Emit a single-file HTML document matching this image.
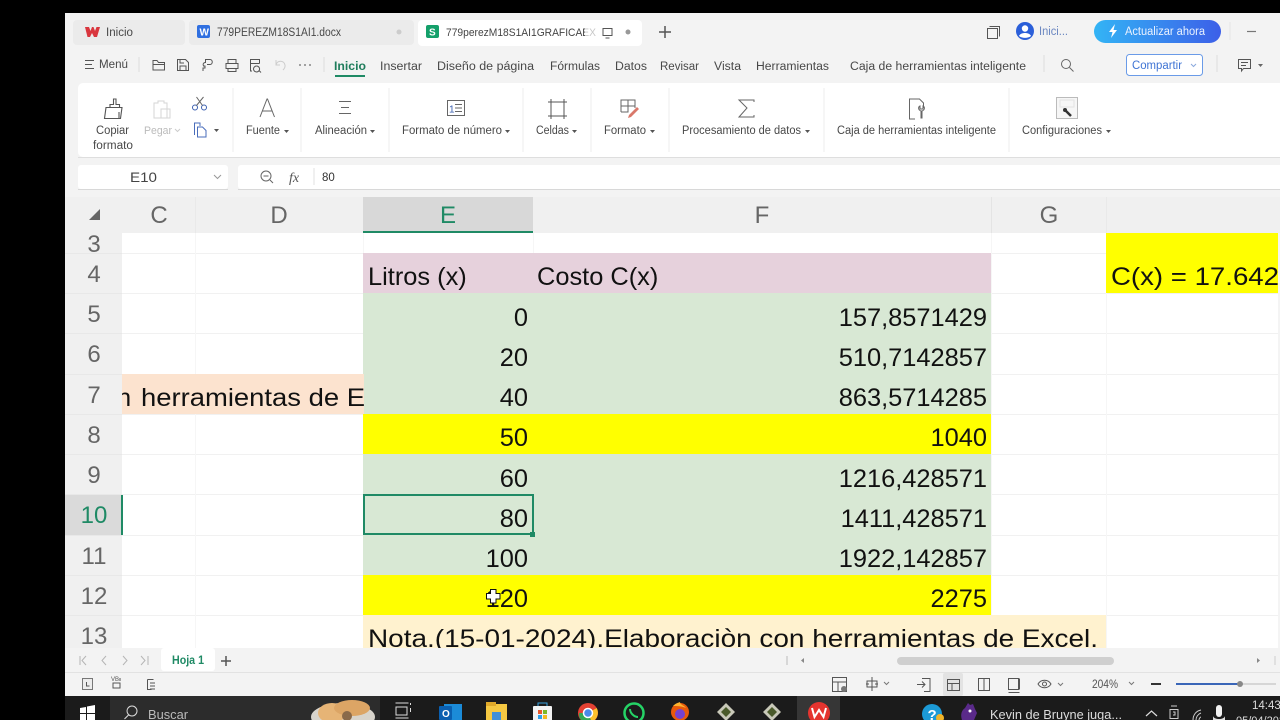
<!DOCTYPE html>
<html><head><meta charset="utf-8"><style>
html,body{margin:0;padding:0;background:#000;width:1280px;height:720px;overflow:hidden}
svg{display:block;font-family:"Liberation Sans",sans-serif}
.t{font-size:11.5px;fill:#484848}
.c{font-size:25.4px;fill:#111}
.r{font-size:24px;fill:#666;text-anchor:middle}
.i{fill:none;stroke:#555;stroke-width:1}
</style></head><body>
<svg width="1280" height="720" viewBox="0 0 1280 720" xmlns="http://www.w3.org/2000/svg">
<defs>
<clipPath id="grid"><rect x="122" y="233" width="1156" height="415"/></clipPath>
<clipPath id="org"><rect x="122" y="374" width="242" height="40"/></clipPath>
<clipPath id="yel"><rect x="1106" y="233" width="172" height="60"/></clipPath>
<clipPath id="task"><rect x="0" y="696" width="1280" height="24"/></clipPath>
<linearGradient id="up" x1="0" x2="1"><stop offset="0" stop-color="#33b4f5"/><stop offset="1" stop-color="#3c5fe8"/></linearGradient>
</defs>
<rect width="1280" height="720" fill="#000"/>
<rect x="65" y="13" width="1215" height="683" fill="#f3f3f3"/>

<!-- tabs -->
<rect x="73" y="20" width="112" height="25" rx="4" fill="#ebebeb"/>
<rect x="189" y="20" width="225" height="25" rx="4" fill="#ebebeb"/>
<rect x="418" y="20" width="224" height="26" rx="4" fill="#fff"/>
<path d="M85 27h4l1.500 4 1.500-4h1.500l1.500 4 1.500-4h3.500l-3 10h-3l-2-4-2 4h-2.500z" fill="#d9363e"/>
<text x="106" y="36" class="t" textLength="27" lengthAdjust="spacingAndGlyphs">Inicio</text>
<rect x="197" y="25" width="13" height="13" rx="2" fill="#2f6fe0"/>
<text x="199.500" y="35.500" font-size="10" font-weight="bold" fill="#fff">W</text>
<text x="217" y="36" class="t" textLength="124" lengthAdjust="spacingAndGlyphs">779PEREZM18S1AI1.docx</text>
<circle cx="399" cy="32" r="2.500" fill="#ccc"/>
<rect x="426" y="25" width="13" height="13" rx="2" fill="#14a06a"/>
<text x="429" y="35.500" font-size="10" font-weight="bold" fill="#fff">S</text>
<text x="446" y="36" font-size="11" fill="#444" textLength="150" lengthAdjust="spacingAndGlyphs">779perezM18S1AI1GRAFICAEX</text>
<rect x="585" y="22" width="12" height="20" fill="#fff" opacity=".7"/>
<path class="i" d="M603 28.500h9v7h-9zM605.500 38h4" stroke="#888"/>
<circle cx="628" cy="32" r="2.500" fill="#999"/>
<path d="M665 26v12M659 32h12" stroke="#555" stroke-width="1.500"/>

<rect x="987.500" y="28.500" width="10" height="10" fill="#f3f3f3" stroke="#555"/><path d="M989.500 26.500h10v10" fill="none" stroke="#555"/>
<circle cx="1025" cy="31" r="9" fill="#2b5fd9"/><circle cx="1025" cy="28.500" r="3.200" fill="#fff"/><path d="M1019 36c1.500-4 10.500-4 12 0-3 2.500-9 2.500-12 0z" fill="#fff"/>
<text x="1039" y="35" font-size="11.500" style="fill:#6a86c0" textLength="29" lengthAdjust="spacingAndGlyphs">Inici...</text>
<rect x="1094" y="20" width="127" height="23" rx="11.500" fill="url(#up)"/>
<path d="M1115 24l-6 8h3.500l-1.500 6 6-8h-3.500z" fill="#fff"/>
<text x="1125" y="35" font-size="11.500" fill="#eaf2ff" textLength="80" lengthAdjust="spacingAndGlyphs">Actualizar ahora</text>
<path d="M1230 22v18" stroke="#e4e4e4"/>
<path d="M1247 31.500h9" stroke="#777" stroke-width="1.200"/>

<!-- menu row -->
<path d="M85 60.500h9M85 64.500h7M85 68.500h9" stroke="#555"/>
<text x="99" y="68" class="t" textLength="29" lengthAdjust="spacingAndGlyphs">Menú</text>
<path d="M139 57v15" stroke="#ddd"/>
<path class="i" d="M153 60.500h4l1.500 2h6v7.500h-11.500zM153 64.500h11.500"/>
<path class="i" d="M177.500 59.500h8l3 3v8h-11zM180 70v-4h6v4M180 60v3h4"/>
<path class="i" d="M203 71v-3h2v-2h-1.500c-1-2 0-3.500 2-3.500v-3h4.500c3 0 3 5 0 5h-3"/>
<path class="i" d="M228 63v-3.500h8v3.500M226 63.500h12v5h-12zM228 68v3.500h8v-3.500"/>
<path class="i" d="M252 71h-1.500v-11.500h9v4M250.500 63.500h9M256.500 66a3 3 0 1 0 .1 0M259 70.500l2 2"/>
<path d="M276 65c1-5 8-5 9 0 .5 2-1 4-2 5M276 60v5h4" fill="none" stroke="#ccc"/>
<circle cx="300" cy="65" r=".9" fill="#666"/><circle cx="305" cy="65" r=".9" fill="#666"/><circle cx="310" cy="65" r=".9" fill="#666"/>
<path d="M324 57v15" stroke="#ddd"/>
<text x="334" y="70" font-size="12" font-weight="bold" fill="#1f7d5c" textLength="32" lengthAdjust="spacingAndGlyphs">Inicio</text>
<rect x="335" y="75" width="30" height="2" fill="#1f8a65"/>
<text x="380" y="70" class="t" textLength="42" lengthAdjust="spacingAndGlyphs">Insertar</text>
<text x="437" y="70" class="t" textLength="97" lengthAdjust="spacingAndGlyphs">Diseño de página</text>
<text x="550" y="70" class="t" textLength="50" lengthAdjust="spacingAndGlyphs">Fórmulas</text>
<text x="615" y="70" class="t" textLength="32" lengthAdjust="spacingAndGlyphs">Datos</text>
<text x="660" y="70" class="t" textLength="39" lengthAdjust="spacingAndGlyphs">Revisar</text>
<text x="714" y="70" class="t" textLength="27" lengthAdjust="spacingAndGlyphs">Vista</text>
<text x="756" y="70" class="t" textLength="73" lengthAdjust="spacingAndGlyphs">Herramientas</text>
<text x="850" y="70" class="t" textLength="176" lengthAdjust="spacingAndGlyphs">Caja de herramientas inteligente</text>
<path d="M1044 55v17" stroke="#ddd"/>
<circle cx="1066" cy="64" r="4.500" fill="none" stroke="#666"/><path d="M1069.500 67.500l4 4" stroke="#666"/>
<rect x="1126.500" y="54.500" width="76" height="21" rx="3" fill="#fff" stroke="#6a9be8"/>
<text x="1132" y="69" font-size="11.500" fill="#3f74d4" textLength="50" lengthAdjust="spacingAndGlyphs">Compartir</text>
<path d="M1191 64l2.500 2.500 2.500-2.500" fill="none" stroke="#8aa8dd"/>
<path d="M1217 55v17" stroke="#ddd"/>
<path class="i" d="M1238.500 59.500h12v9h-7l-2 2.500v-2.500h-3zM1241 62.500h7M1241 65.500h5"/>
<path d="M1258 64h5l-2.500 3z" fill="#666"/>

<!-- ribbon -->
<rect x="78" y="83" width="1210" height="74" rx="5" fill="#fff"/>
<path d="M78 157.500h1202" stroke="#dedede"/>
<g stroke="#ececec"><path d="M233 88v64M301 88v64M389 88v64M523 88v64M591 88v64M669 88v64M824 88v64M1009 88v64"/></g>
<path d="M106 107.500h16l-1.500 11h-16zM110 107.500v-3h3.500v-5.500h2.500v5.500h3.500v3M119 112v6" fill="none" stroke="#555" stroke-width="1.100"/>
<text x="96" y="134" class="t" textLength="33" lengthAdjust="spacingAndGlyphs">Copiar</text>
<text x="93" y="149" class="t" textLength="40" lengthAdjust="spacingAndGlyphs">formato</text>
<path d="M154 103h4v-2h6v2h3v15h-13z M161 109h9v9h-9z" fill="none" stroke="#d5d5d5"/>
<text x="144" y="134" font-size="11" fill="#bbb" textLength="28" lengthAdjust="spacingAndGlyphs">Pegar</text>
<path d="M175 129l2.500 2.500 2.500-2.500" fill="none" stroke="#ccc"/>
<g fill="none" stroke="#3a5fb0"><circle cx="195" cy="107.500" r="2.500"/><circle cx="204" cy="107.500" r="2.500"/></g>
<path d="M196.500 105.500l7-8.500M202.500 105.500l-6-8.500" stroke="#666" fill="none"/>
<path d="M194.500 135v-12h5.500v3M197.500 137v-10h5l3.500 3.500v6.500z" fill="none" stroke="#4a6dbb"/>
<path d="M214 129h5l-2.500 3z" fill="#555"/>
<path d="M260 117l7-18h.5l7 18M262.500 111h10" fill="none" stroke="#666"/>
<text x="246" y="134" class="t" textLength="34" lengthAdjust="spacingAndGlyphs">Fuente</text>
<path d="M284 130h5l-2.500 3z" fill="#555"/>
<path d="M339 101.500h12M341 107.500h8M339 113.500h12" stroke="#666"/>
<text x="315" y="134" class="t" textLength="52" lengthAdjust="spacingAndGlyphs">Alineación</text>
<path d="M370 130h5l-2.500 3z" fill="#555"/>
<rect x="447.500" y="100.500" width="17" height="15" fill="none" stroke="#666"/>
<text x="449" y="112.500" font-size="10" fill="#3a5fb0">1</text><path d="M455 104.500h7M455 108h7M455 111.500h7" stroke="#666"/>
<text x="402" y="134" class="t" textLength="100" lengthAdjust="spacingAndGlyphs">Formato de número</text>
<path d="M505 130h5l-2.500 3z" fill="#555"/>
<path d="M551 102h13v14h-13zM551 99v20M564 99v20M548 102h19M548 116h19" fill="none" stroke="#555"/>
<text x="536" y="134" class="t" textLength="33" lengthAdjust="spacingAndGlyphs">Celdas</text>
<path d="M572 130h5l-2.500 3z" fill="#555"/>
<path d="M621 112v-12h14v8M621 106h14M628 100v12h-7" fill="none" stroke="#666"/>
<path d="M629 115l8-8 2 2-8 8-3 1z" fill="#d9786a"/>
<text x="604" y="134" class="t" textLength="42" lengthAdjust="spacingAndGlyphs">Formato</text>
<path d="M650 130h5l-2.500 3z" fill="#555"/>
<path d="M754 102v-2h-15l8 8-8 9h15v-2" fill="none" stroke="#666"/>
<text x="682" y="134" class="t" textLength="119" lengthAdjust="spacingAndGlyphs">Procesamiento de datos</text>
<path d="M805 130h5l-2.500 3z" fill="#555"/>
<path d="M915 119h-5.500v-20h10l4 4v5M921 111c-3-1-3-4-1-5v3h3v-3c2 1 2 4-1 5v7h-1z" fill="none" stroke="#666"/>
<text x="837" y="134" class="t" textLength="159" lengthAdjust="spacingAndGlyphs">Caja de herramientas inteligente</text>
<rect x="1056.500" y="97.500" width="21" height="21" fill="#f6f6f6" stroke="#bbb"/>
<path d="M1060 100h14v7h-14z" fill="none" stroke="#e3e3e3"/>
<path d="M1065 110l6 6" stroke="#333" stroke-width="2.500"/><circle cx="1065" cy="110" r="2" fill="#333"/>
<text x="1022" y="134" class="t" textLength="80" lengthAdjust="spacingAndGlyphs">Configuraciones</text>
<path d="M1106 130h5l-2.500 3z" fill="#555"/>

<!-- formula bar -->
<rect x="78" y="165" width="150" height="24" rx="3" fill="#fff"/>
<rect x="238" y="165" width="1050" height="24" rx="3" fill="#fff"/>
<path d="M238 189.500h1042" stroke="#d8d8d8"/><path d="M78 189.500h150" stroke="#d8d8d8"/>
<text x="130" y="182" font-size="14" fill="#444" textLength="27" lengthAdjust="spacingAndGlyphs">E10</text>
<path d="M214 175l3.500 3.500 3.500-3.500" fill="none" stroke="#999"/>
<circle cx="266" cy="176" r="5" fill="none" stroke="#666"/><path d="M263.500 176h5M270 180l3 3" stroke="#666"/>
<text x="289" y="182" font-family="Liberation Serif" font-style="italic" font-size="14" fill="#555">fx</text>
<path d="M314 168v17" stroke="#e2e2e2"/>
<text x="322" y="181" font-size="11.500" fill="#333">80</text>

<!-- column headers -->
<rect x="65" y="197" width="1215" height="36" fill="#f0f0f0"/>
<path d="M195.500 197v36M1106.500 197v36" stroke="#e9e9e9"/><path d="M991.500 197v36" stroke="#e4e4e4"/>
<path d="M100 209v11h-11z" fill="#666"/>
<rect x="363" y="197" width="170" height="34" fill="#d8d8d8"/>
<rect x="363" y="231" width="170" height="2" fill="#1f8a65"/>
<text x="159" y="223" class="r">C</text>
<text x="279" y="223" class="r">D</text>
<text x="448" y="223" class="r" style="fill:#1f8a65">E</text>
<text x="762" y="223" class="r">F</text>
<text x="1049" y="223" class="r">G</text>

<!-- row headers -->
<rect x="65" y="233" width="57" height="415" fill="#f0f0f0"/>
<rect x="65" y="495" width="57" height="40" fill="#dadada"/>
<g stroke="#e8e8e8"><path d="M65 253.500h57M65 293.500h57M65 333.500h57M65 374.500h57M65 414.500h57M65 454.500h57M65 494.500h57M65 535.500h57M65 575.500h57M65 615.500h57"/></g>
<text x="94" y="252" class="r">3</text>
<text x="94" y="282" class="r">4</text>
<text x="94" y="322" class="r">5</text>
<text x="94" y="362" class="r">6</text>
<text x="94" y="403" class="r">7</text>
<text x="94" y="443" class="r">8</text>
<text x="94" y="483" class="r">9</text>
<text x="94" y="523" class="r" style="fill:#1f8a65">10</text>
<text x="94" y="564" class="r">11</text>
<text x="94" y="604" class="r">12</text>
<text x="94" y="644" class="r">13</text>

<!-- grid -->
<rect x="122" y="233" width="1156" height="415" fill="#fff"/>
<rect x="1278" y="233" width="2" height="415" fill="#f4f4f4"/>
<g stroke="#f1f1f1">
<path d="M122 253.500h1156M122 293.500h1156M122 333.500h1156M122 374.500h1156M122 414.500h1156M122 454.500h1156M122 494.500h1156M122 535.500h1156M122 575.500h1156M122 615.500h1156"/>
</g>
<g stroke="#f6f6f6">
<path d="M195.500 233v415M363.500 233v415M533.500 233v20M991.500 233v415M1106.500 233v415"/>
</g>
<rect x="121" y="495" width="2" height="40" fill="#1f8a65"/>
<rect x="363" y="253" width="628" height="40" fill="#e6d1dc"/>
<rect x="363" y="293" width="628" height="121" fill="#d8e8d4"/>
<rect x="363" y="414" width="628" height="40" fill="#ffff00"/>
<rect x="363" y="454" width="628" height="121" fill="#d8e8d4"/>
<rect x="363" y="575" width="628" height="40" fill="#ffff00"/>
<rect x="363" y="615" width="743" height="33" fill="#fff2cf"/>
<rect x="122" y="374" width="242" height="40" fill="#fce3cf"/>
<rect x="1106" y="233" width="172" height="60" fill="#ffff00"/>

<g clip-path="url(#grid)">
<text x="368" y="285" class="c">Litros (x)</text>
<text x="537" y="285" class="c">Costo C(x)</text>
<g text-anchor="end">
<text x="528" y="326" class="c">0</text><text x="987" y="326" class="c">157,8571429</text>
<text x="528" y="366" class="c">20</text><text x="987" y="366" class="c">510,7142857</text>
<text x="528" y="406" class="c">40</text><text x="987" y="406" class="c">863,5714285</text>
<text x="528" y="446" class="c">50</text><text x="987" y="446" class="c">1040</text>
<text x="528" y="487" class="c">60</text><text x="987" y="487" class="c">1216,428571</text>
<text x="528" y="527" class="c">80</text><text x="987" y="527" class="c">1411,428571</text>
<text x="528" y="567" class="c">100</text><text x="987" y="567" class="c">1922,142857</text>
<text x="528" y="607" class="c">120</text><text x="987" y="607" class="c">2275</text>
</g>
<text x="368" y="647" class="c" textLength="730" lengthAdjust="spacingAndGlyphs">Nota.(15-01-2024).Elaboraciòn con herramientas de Excel.</text>
</g>
<g clip-path="url(#org)"><text x="117" y="406" class="c">n</text><text x="141" y="406" class="c" textLength="224" lengthAdjust="spacingAndGlyphs">herramientas de E</text></g>
<g clip-path="url(#yel)"><text x="1111" y="285" class="c" textLength="168" lengthAdjust="spacingAndGlyphs">C(x) = 17.642</text></g>

<rect x="364" y="495" width="169" height="39" fill="none" stroke="#1f8a65" stroke-width="2"/>
<rect x="530" y="532" width="5" height="5" fill="#1f8a65"/>
<path d="M490.500 589.500h5.500v4h4v5.500h-4v4h-5.500v-4h-4v-5.500h4z" fill="#fff" stroke="#111" stroke-width="1"/>

<!-- sheet bar -->
<rect x="65" y="648" width="1215" height="24" fill="#f3f3f3"/>
<path d="M65 672.500h1215" stroke="#e2e2e2"/>
<g fill="none" stroke="#b5b5b5"><path d="M80 656v9M86 656l-4 4.500 4 4.500M106 656l-4 4.500 4 4.500M123 656l4 4.500-4 4.500M141 656l4 4.500-4 4.500M148 656v9"/></g>
<rect x="161" y="648" width="54" height="23" rx="3" fill="#fff"/>
<text x="172" y="664" font-size="11.500" font-weight="bold" fill="#1f8a65" textLength="32" lengthAdjust="spacingAndGlyphs">Hoja 1</text>
<path d="M226 656v10M221 661h10" stroke="#555" stroke-width="1.500"/>
<path d="M787 656v9" stroke="#bbb"/><path d="M804 658v5l-3-2.500z" fill="#888"/>
<rect x="897" y="657" width="217" height="8" rx="4" fill="#cfcfcf"/>
<path d="M1257 658v5l3-2.500z" fill="#888"/><path d="M1275 656v9" stroke="#ccc"/>

<!-- status bar -->
<path d="M82.500 678.500h10v11h-10z" fill="#ececec" stroke="#777"/><path d="M86.500 682v4h3" fill="none" stroke="#555"/>
<text x="111" y="681" font-size="6" fill="#555">VB</text><path class="i" d="M113 683h7v5h-7zM120 678v3" stroke="#666"/>
<path class="i" d="M147.500 679.500v10h4M147.500 679.500h6M150 683h5M150 686h5M150 689h5" stroke="#666"/>
<path class="i" d="M832.500 677.500h14v14h-14zM832.500 682h14M838 682v9.500"/><circle cx="844" cy="689" r="3" fill="#777"/>
<path class="i" d="M872 677v14M867 681h10v6h-10zM869 684h-3M875 684h3"/>
<path d="M884 682l2.500 2.500 2.500-2.500" fill="none" stroke="#777"/>
<path class="i" d="M922 678.500h8v13h-6M917 684.500h8M922 681.500l3 3-3 3"/>
<rect x="943" y="673" width="20" height="23" rx="2" fill="#e3e3e3"/>
<path class="i" d="M947.500 679.500h12v11h-12zM947.500 683.500h12M952 683.500v7"/>
<path class="i" d="M978.500 678.500h11v12h-11zM984 678.500v12"/>
<path class="i" d="M1008.500 678.500h10v11h-10zM1008.500 692.500h11M1019.500 678.500v11"/>
<path class="i" d="M1038 684c3-5 10-5 13 0-3 5-10 5-13 0z"/><circle cx="1044.500" cy="684" r="2" fill="none" stroke="#555"/>
<path d="M1058 683l2.500 2.500 2.500-2.500" fill="none" stroke="#777"/>
<text x="1092" y="688" font-size="11.500" fill="#555" textLength="26" lengthAdjust="spacingAndGlyphs">204%</text>
<path d="M1129 682l2.500 2.500 2.500-2.500" fill="none" stroke="#777"/>
<path d="M1151 684h10" stroke="#333" stroke-width="2"/>
<path d="M1176 684h62" stroke="#3a66b8" stroke-width="2"/><path d="M1240 684h36" stroke="#ccc" stroke-width="1.500"/>
<circle cx="1240" cy="684" r="3" fill="#888"/>

<!-- taskbar -->
<rect x="0" y="696" width="1280" height="24" fill="#000"/>
<rect x="65" y="696" width="1215" height="24" fill="#1b1b1b"/>
<rect x="110" y="696" width="270" height="24" fill="#2c2c2c"/>
<g fill="#fff"><path d="M80 708l6-1v6h-6zM87 706.500l8-1.500v8h-8zM80 714h6v6h-6zM87 714h8v6h-8z"/></g>
<circle cx="132" cy="711" r="5" fill="none" stroke="#ddd"/><path d="M128.500 715l-4 4" stroke="#ddd"/>
<text x="148" y="719" font-size="13" fill="#bbb" textLength="40" lengthAdjust="spacingAndGlyphs">Buscar</text>
<g clip-path="url(#task)">
<ellipse cx="343" cy="717" rx="32" ry="14" fill="#d8d4cc"/>
<ellipse cx="332" cy="713" rx="14" ry="10" fill="#e6b476"/>
<ellipse cx="352" cy="708" rx="18" ry="8" fill="#dca565"/>
<ellipse cx="347" cy="716" rx="5" ry="5" fill="#8a6a4a"/>
<path d="M395.500 703h13M395.500 718h13M396 707h11v8h-11z" fill="none" stroke="#ddd"/><path d="M410.500 703v2M410.500 708v4" stroke="#ddd"/>
<path d="M444 704h18v16h-18z" fill="#1b8bd8"/><rect x="439" y="706" width="13" height="14" rx="1" fill="#0a5fb0"/><text x="442" y="717" font-size="10" font-weight="bold" fill="#fff">O</text>
<rect x="486" y="704" width="21" height="16" fill="#f5c842"/><rect x="486" y="702" width="10" height="4" fill="#e0a92a"/><rect x="492" y="712" width="9" height="8" fill="#3f8fd8"/>
<rect x="533" y="706" width="19" height="15" rx="1" fill="#f3f3f3"/><path d="M538 706v-3h9v3" fill="none" stroke="#3aa0dd"/>
<rect x="538" y="710" width="4" height="4" fill="#e8572a"/><rect x="543" y="710" width="4" height="4" fill="#7cb927"/><rect x="538" y="715" width="4" height="4" fill="#2f9ee8"/><rect x="543" y="715" width="4" height="4" fill="#f5b81e"/>
<circle cx="588" cy="713" r="10" fill="#e34133"/><path d="M588 713l8.700-5a10 10 0 0 1-5 14z" fill="#fbc02d"/><path d="M588 713l3.700 9a10 10 0 0 1-12.300-4.500l-.4-4.500z" fill="#34a853"/><circle cx="588" cy="713" r="4.500" fill="#4a8ae8" stroke="#fff" stroke-width="1.500"/>
<circle cx="634" cy="713" r="9.500" fill="none" stroke="#25d366" stroke-width="2.500"/><path d="M630 709c0 4 4 8 8 8" fill="none" stroke="#25d366" stroke-width="2"/>
<circle cx="680" cy="712" r="9" fill="#e8590c"/><circle cx="680" cy="714" r="5" fill="#7542d0"/><path d="M673 706c3-3 5-3 7-4 0 3 4 3 6 6-4-2-10-2-13-2z" fill="#ffb22e"/>
<path d="M726 703l9 9-9 9-9-9z" fill="#c8c8b8"/><path d="M726 707l5 5-5 5-5-5z" fill="#4a5a2a"/>
<path d="M772 703l9 9-9 9-9-9z" fill="#c8c8b8"/><path d="M772 707l5 5-5 5-5-5z" fill="#4a5a2a"/>
<rect x="797" y="696" width="43" height="24" fill="#363636"/>
<circle cx="819" cy="713" r="11" fill="#e5342f"/><path d="M812 708l2.500 9 4.500-7 4.500 7 2.500-9" fill="none" stroke="#fff" stroke-width="2"/>
<circle cx="932" cy="714" r="10" fill="#1c9ad6"/><text x="927.500" y="720" font-size="15" font-weight="bold" fill="#fff">?</text><circle cx="940" cy="718" r="4" fill="#f0b429"/>
<path d="M962 720c-2-6 0-10 3-12l3-5 2 2 3-1 2 5 2 4-3 7z" fill="#5a2a8a"/><circle cx="970" cy="711" r="1.500" fill="#fff"/>
<text x="990" y="719" font-size="13" fill="#ddd" textLength="132" lengthAdjust="spacingAndGlyphs">Kevin de Bruyne juga...</text>
<path d="M1146 716l5.500-5 5.500 5" fill="none" stroke="#ddd" stroke-width="1.200"/>
<path d="M1170 709.500h8v9h-8zM1171 706h6M1173 712h2v3h-2" fill="none" stroke="#ccc"/>
<path d="M1193 720c0-5 3-9 8-10M1196 720c0-3 2-6 5-7M1199 720c0-1 1-3 2-3" fill="none" stroke="#ccc"/>
<rect x="1216" y="705" width="6" height="12" rx="3" fill="#f2f2f2"/><path d="M1213 716c1 4 11 4 12 0v4h-12z" fill="#ddd"/>
<text x="1252" y="709" font-size="11.500" fill="#ddd">14:43</text>
<text x="1236" y="724" font-size="11" fill="#ddd">05/04/2024</text>
</g>
</svg>
</body></html>
